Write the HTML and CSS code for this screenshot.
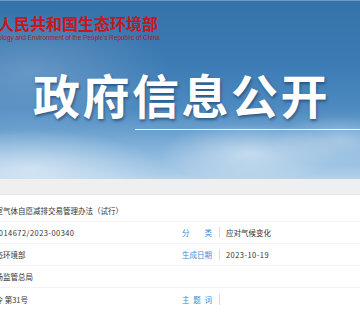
FILE: index.html
```
<!DOCTYPE html>
<html lang="zh-CN">

<head>
	<meta charset="utf-8">
	<title>政府信息公开</title>
	<link rel="stylesheet" href="styles.css">
</head>

<body>
	<div class="banner">
		<div class="logo">
			<div class="logo-cn">中华人民共和国生态环境部</div>
			<div class="logo-en">Ministry of Ecology and Environment of the People's Republic of China</div>
		</div>
		<h1 class="title">政府信息公开</h1>
		<div class="rule"></div>
	</div>
	<div class="strip"></div>

	<div class="info">
		<div class="row">
			<div class="cell wide">
				<span class="label">名　称</span><span class="bar"></span>
				<span class="value">温室气体自愿减排交易管理办法（试行）</span>
			</div>
		</div>
		<div class="row">
			<div class="cell">
				<span class="label">索引号</span><span class="bar"></span>
				<span class="value num index">000014672/2023-00340</span>
			</div>
			<div class="cell">
				<span class="label">分　类</span><span class="bar"></span>
				<span class="value">应对气候变化</span>
			</div>
		</div>
		<div class="row">
			<div class="cell">
				<span class="label">发布机关</span><span class="bar"></span>
				<span class="value">生态环境部</span>
			</div>
			<div class="cell">
				<span class="label">生成日期</span><span class="bar"></span>
				<span class="value num">2023-10-19</span>
			</div>
		</div>
		<div class="row">
			<div class="cell wide">
				<span class="label">联合发布</span><span class="bar"></span>
				<span class="value">市场监管总局</span>
			</div>
		</div>
		<div class="row">
			<div class="cell">
				<span class="label">文　号</span><span class="bar"></span>
				<span class="value">部令 第31号</span>
			</div>
			<div class="cell">
				<span class="label">主题词</span><span class="bar"></span>
				<span class="value"></span>
			</div>
		</div>
	</div>
</body>

</html>
```

FILE: styles.css
```
body {
	margin: 0;
	overflow: hidden;
	font-family: "Noto Sans CJK SC", "Noto Sans", sans-serif;
	background: #fff;
}

/* banner */
.banner {
	height: 179px;
	overflow: hidden;
	background:
		radial-gradient(ellipse 130px 40px at 30px 168px, rgba(255, 255, 255, .5), transparent),
		radial-gradient(ellipse 90px 30px at 250px 152px, rgba(255, 255, 255, .5), transparent),
		radial-gradient(ellipse 70px 25px at 340px 140px, rgba(255, 255, 255, .35), transparent),
		radial-gradient(ellipse 140px 60px at 30px 70px, rgba(255, 255, 255, .2), transparent),
		linear-gradient(180deg, #3572aa 0%, #3c7bb4 35%, #4d8ac0 60%, #88b6dc 85%, #b3d1ea 100%);
	border-top: 1px solid #6d9bc7;
	box-sizing: border-box;
}

.logo {
	padding-top: 12px;
	margin-left: -34px;
	width: 196px;
}

.logo-cn {
	font-size: 16px;
	font-weight: bold;
	line-height: 20px;
	color: #c8161d;
	white-space: nowrap;
}

.logo-en {
	font-family: "Liberation Sans", Arial, sans-serif;
	font-size: 6.4px;
	line-height: 10px;
	color: #b5161c;
	white-space: nowrap;
	margin-left: -6px;
}

.title {
	margin: 25px 0 0 33px;
	font-size: 47px;
	line-height: 51px;
	font-weight: bold;
	color: #fff;
	letter-spacing: 2.5px;
	text-shadow: 1px 2px 3px rgba(20, 50, 90, .6);
	white-space: nowrap;
}

.rule {
	margin: 10px 0 0 135px;
	height: 1px;
	background: rgba(255, 255, 255, .85);
}

.strip {
	height: 15px;
	background: #efefef;
	border-bottom: 1px solid #e6e6e6;
}

/* info table */
.info {
	padding-top: 5px;
	margin-left: -56px;
	width: 480px;
}

.row {
	display: flex;
	height: 22px;
	border-bottom: 1px solid #f3f3f3;
	box-sizing: border-box;
}

.row:last-child {
	border-bottom: none;
}

.cell {
	width: 238px;
	display: flex;
	align-items: center;
	font-size: 7.5px;
	white-space: nowrap;
}

.cell.wide {
	width: 476px;
}

.label {
	width: 30px;
	color: #3e8bd4;
	text-align: justify;
	text-align-last: justify;
}

.bar {
	width: 1px;
	height: 11px;
	background: #dcdcdc;
	margin: 0 6px 0 7px;
}

.value {
	color: #333;
}

.num {
	letter-spacing: .45px;
}

.index {
	margin-left: -3px;
}
```
